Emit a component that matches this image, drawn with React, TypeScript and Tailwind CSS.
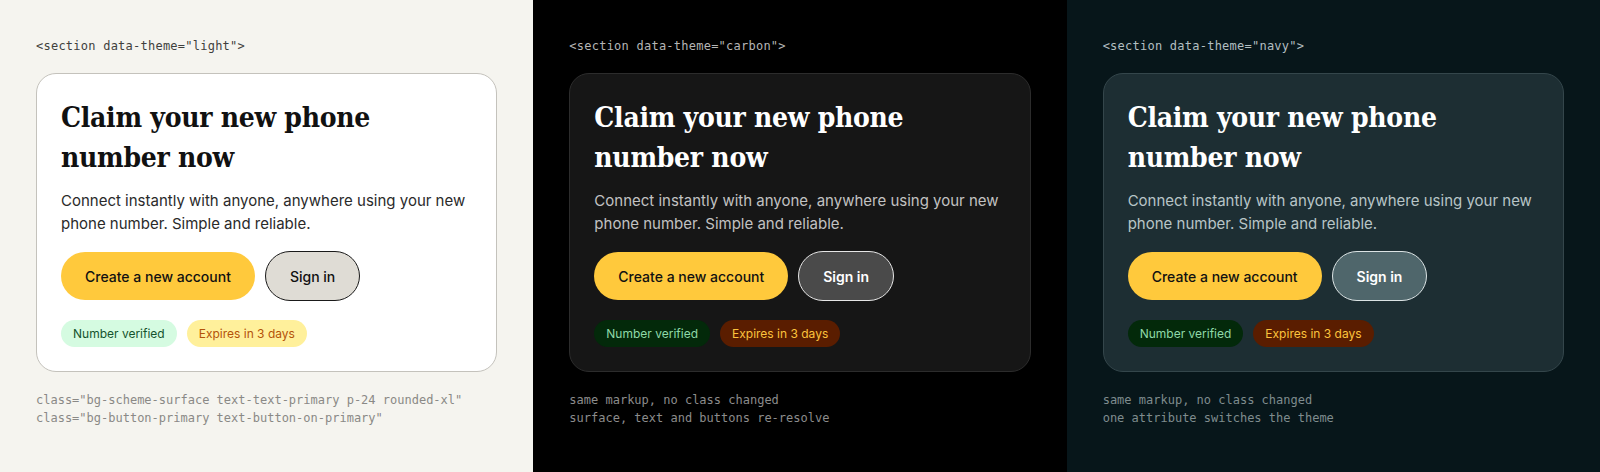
import React from 'react';

type Theme = {
  name: string;
  panel: string;
  label: string;
  card: string;
  heading: string;
  body: string;
  secondary: string;
  ok: string;
  warn: string;
  caption: string;
  notes: string[];
};

const THEMES: Theme[] = [
  {
    name: 'light',
    panel: 'bg-[#f5f4ef]',
    label: 'text-[#3f3f3d]',
    card: 'bg-white border-[#c4c2bc]',
    heading: 'text-[#111111]',
    body: 'text-[#2a2a2a]',
    secondary: 'bg-[#dfdcd5] border-[#1a1a1a] text-[#111111]',
    ok: 'bg-[#d5fbe1] text-[#14532d]',
    warn: 'bg-[#fff09b] text-[#b45309]',
    caption: 'text-[#8a8986]',
    notes: [
      'class="bg-scheme-surface text-text-primary p-24 rounded-xl"',
      'class="bg-button-primary text-button-on-primary"',
    ],
  },
  {
    name: 'carbon',
    panel: 'bg-black',
    label: 'text-[#b5b5b5]',
    card: 'bg-[#161616] border-[#2c2c2c]',
    heading: 'text-white',
    body: 'text-[#c2c2c2]',
    secondary: 'bg-[#4a4a4a] border-[#e6e6e6] text-white font-semibold',
    ok: 'bg-[#03290a] text-[#8fd9a8]',
    warn: 'bg-[#5a1d00] text-[#fcc33d]',
    caption: 'text-[#8c8c8c]',
    notes: ['same markup, no class changed', 'surface, text and buttons re-resolve'],
  },
  {
    name: 'navy',
    panel: 'bg-[#07161a]',
    label: 'text-[#b3bfc1]',
    card: 'bg-[#1d2e33] border-[#34464b]',
    heading: 'text-white',
    body: 'text-[#b8c5c7]',
    secondary: 'bg-[#4f666b] border-[#dbe3e4] text-white font-semibold',
    ok: 'bg-[#03290a] text-[#8fd9a8]',
    warn: 'bg-[#5a1d00] text-[#fcc33d]',
    caption: 'text-[#7f8c8e]',
    notes: ['same markup, no class changed', 'one attribute switches the theme'],
  },
];

const mono = "font-['DejaVu_Sans_Mono','Liberation_Mono',monospace]";

function Panel({ t }: { t: Theme }) {
  return (
    <section className={`${t.panel} px-9 pt-[37px] h-[472px]`}>
      <div className={`${mono} ${t.label} text-[12px] leading-[18px] tracking-[0.02em]`}>
        {`<section data-theme="${t.name}">`}
      </div>

      <div className={`${t.card} border rounded-[20px] p-6 mt-[18px]`}>
        <h2
          className={`${t.heading} font-['DejaVu_Serif','Liberation_Serif',serif] [font-stretch:condensed] font-bold text-[28px] leading-[40px] tracking-[-0.01em]`}
        >
          Claim your new phone
          <br />
          number now
        </h2>
        <p className={`${t.body} font-['Inter',sans-serif] text-[15px] leading-[22.5px] mt-3`}>
          Connect instantly with anyone, anywhere using your new phone number. Simple and reliable.
        </p>

        <div className="flex items-center gap-2.5 mt-4 font-['Inter',sans-serif] text-[14px] font-medium">
          <button className="bg-[#ffc93c] text-[#111111] rounded-full px-6 h-12">Create a new account</button>
          <button className={`${t.secondary} border rounded-full px-6 h-[50px]`}>Sign in</button>
        </div>

        <div className="flex gap-2.5 mt-[19px] font-['Inter',sans-serif] text-[12px] leading-[19px]">
          <span className={`${t.ok} rounded-full px-3 py-1`}>Number verified</span>
          <span className={`${t.warn} rounded-full px-3 py-1`}>Expires in 3 days</span>
        </div>
      </div>

      <div className={`${mono} ${t.caption} text-[12px] leading-[18px] mt-[19px]`}>
        {t.notes.map((n) => (
          <div key={n}>{n}</div>
        ))}
      </div>
    </section>
  );
}

export default function App() {
  return (
    <div className="grid grid-cols-3 w-[1600px] h-[472px] overflow-hidden">
      {THEMES.map((t) => (
        <Panel key={t.name} t={t} />
      ))}
    </div>
  );
}
